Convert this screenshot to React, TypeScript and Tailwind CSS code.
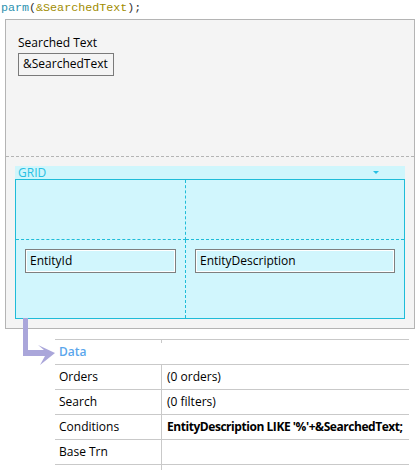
const ui = { fontFamily: '"Segoe UI", "Open Sans", "Noto Sans", sans-serif' };
const mono = { fontFamily: '"Liberation Mono", "DejaVu Sans Mono", monospace' };

type Row = { label: string; value: string; bold?: boolean };

const rows: Row[] = [
  { label: "Orders", value: "(0 orders)" },
  { label: "Search", value: "(0 filters)" },
  { label: "Conditions", value: "EntityDescription LIKE '%'+&SearchedText;", bold: true },
  { label: "Base Trn", value: "" },
];

function GridField({ text }: { text: string }) {
  return (
    <div className="h-[24px] border border-[#7f7f7f] bg-[#d1f6fd] shadow-[inset_0_0_0_1px_#ffffff] pl-[4px] text-[12px] leading-[21px] text-black">
      {text}
    </div>
  );
}

export default function App() {
  return (
    <div className="relative w-[419px] h-[470px] bg-white overflow-hidden text-black" style={ui}>
      <div className="h-[19px] pl-[1px] text-[11.7px] leading-[16px]" style={mono}>
        <span className="text-[#2b91af]">parm</span>
        <span className="text-[#333]">(</span>
        <span className="text-[#a08c00]">&amp;SearchedText</span>
        <span className="text-[#333]">);</span>
      </div>

      <div className="ml-[5px] w-[410px] h-[310px] border border-[#b4b4b4] bg-[#f4f4f4]">
        <div className="h-[137px] border-b border-dashed border-[#b4b4b4] pt-[15px] pl-[12px]">
          <div className="text-[12px] leading-[16px]">Searched Text</div>
          <div className="mt-[2px] w-[96px] h-[23px] border border-[#7a7a7a] pl-[4px] text-[12px] leading-[20px]">
            &amp;SearchedText
          </div>
        </div>

        <div className="px-[9px] pt-[9px]">
          <div className="flex items-center justify-between h-[13px] bg-[#cff6fc] pl-[3px] pr-[26px]">
            <span className="text-[12px] leading-[13px] text-[#28c0e3]">GRID</span>
            <span className="w-0 h-0 border-l-[3px] border-r-[3px] border-t-[3px] border-l-transparent border-r-transparent border-t-[#28c0e3]" />
          </div>
          <div className="h-[140px] border border-[#1fbcd8] bg-[#d1f6fd] grid grid-cols-[170px_1fr] grid-rows-[60px_1fr]">
            <div className="border-r border-b border-dashed border-[#1fbcd8]" />
            <div className="border-b border-dashed border-[#1fbcd8]" />
            <div className="border-r border-dashed border-[#1fbcd8] pt-[9px] pl-[9px] pr-[9px]">
              <GridField text="EntityId" />
            </div>
            <div className="pt-[9px] pl-[9px] pr-[9px]">
              <GridField text="EntityDescription" />
            </div>
          </div>
        </div>
      </div>

      <div className="ml-[55px] mt-[10px] w-[354px] border-t border-[#c9c9c9]">
        <div className="relative h-[25px] border-b border-[#c9c9c9] pl-[4px] text-[12px] leading-[24px] font-semibold text-[#5aa6ec]">
          Data
          <span className="absolute left-[106px] top-0 w-px h-[3px] bg-[#c9c9c9]" />
        </div>
        {rows.map((r) => (
          <div key={r.label} className="flex h-[25px] border-b border-[#c9c9c9] text-[12px] leading-[24px]">
            <div className="w-[107px] shrink-0 border-r border-[#c9c9c9] pl-[4px]">{r.label}</div>
            <div className={`pl-[5px] whitespace-nowrap ${r.bold ? "font-bold tracking-[-0.45px]" : ""}`}>{r.value}</div>
          </div>
        ))}
        <div className="ml-[106px] w-px h-[10px] bg-[#c9c9c9]" />
      </div>

      <svg className="absolute left-0 top-0" width="80" height="470" viewBox="0 0 80 470">
        <path
          d="M23 318 L28 318 L28 350 L44 350 L38 345 L55 353 L40 365 L45 356 L23 356 Z"
          fill="#aaa6da"
        />
      </svg>
    </div>
  );
}
